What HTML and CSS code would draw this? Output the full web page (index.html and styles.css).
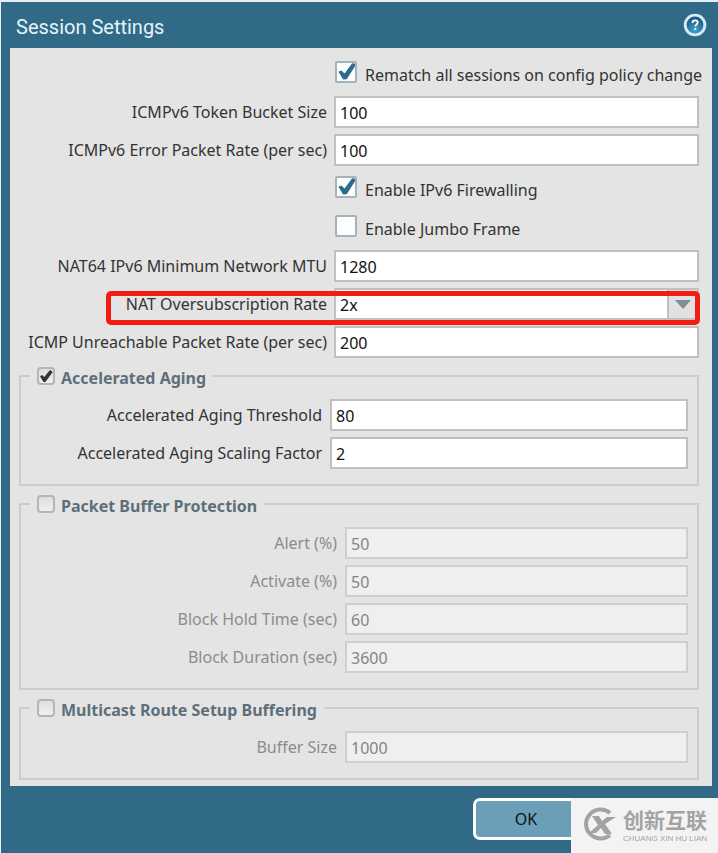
FILE: index.html
```html
<!DOCTYPE html>
<html lang="en">
<head>
  <meta charset="UTF-8" />
  <meta name="viewport" content="width=device-width, initial-scale=1.0" />
  <title>Session Settings</title>
  <link rel="stylesheet" href="styles.css">
</head>
<body>
  <form class="dialog">
    <!-- Title bar -->
    <header class="titlebar">
      <h1>Session Settings</h1>
      <button type="button" class="help" aria-label="Help">
        <svg width="24" height="24" viewBox="0 0 24 24">
          <defs>
            <radialGradient id="ball" cx="50%" cy="80%" r="75%">
              <stop offset="0" stop-color="#3fa3cf" />
              <stop offset="1" stop-color="#1d5480" />
            </radialGradient>
          </defs>
          <circle cx="12" cy="12" r="11.3" fill="#d5eaf8" />
          <circle cx="12" cy="12" r="8.4" fill="url(#ball)" />
          <path d="M9.4 9.8c.2-1.6 1.300-2.400 2.700-2.400 1.500 0 2.600.9 2.600 2.200 0 1.800-2.400 2-2.400 4" fill="none" stroke="#fff" stroke-width="1.8" />
          <circle cx="12.3" cy="16" r="1.1" fill="#fff" />
        </svg>
      </button>
    </header>

    <main class="panel">
      <div class="check-row">
        <input type="checkbox" class="check" id="rematch" checked />
        <label for="rematch">Rematch all sessions on config policy change</label>
      </div>
      <div class="row">
        <label for="bucket">ICMPv6 Token Bucket Size</label>
        <input type="text" class="field" id="bucket" value="100" />
      </div>
      <div class="row">
        <label for="error-rate">ICMPv6 Error Packet Rate (per sec)</label>
        <input type="text" class="field" id="error-rate" value="100" />
      </div>
      <div class="check-row">
        <input type="checkbox" class="check" id="ipv6" checked />
        <label for="ipv6">Enable IPv6 Firewalling</label>
      </div>
      <div class="check-row">
        <input type="checkbox" class="check" id="jumbo" />
        <label for="jumbo">Enable Jumbo Frame</label>
      </div>
      <div class="row">
        <label for="mtu">NAT64 IPv6 Minimum Network MTU</label>
        <input type="text" class="field" id="mtu" value="1280" />
      </div>
      <div class="row highlight">
        <label for="nat-rate">NAT Oversubscription Rate</label>
        <div class="combo">
          <select class="field" id="nat-rate">
            <option>1x</option>
            <option selected>2x</option>
            <option>4x</option>
            <option>8x</option>
          </select>
          <span class="trigger"></span>
        </div>
      </div>
      <div class="row">
        <label for="unreachable">ICMP Unreachable Packet Rate (per sec)</label>
        <input type="text" class="field" id="unreachable" value="200" />
      </div>

      <fieldset class="group aging">
        <legend>
          <input type="checkbox" class="toggle" id="aging" checked />
          <label for="aging">Accelerated Aging</label>
        </legend>
        <div class="row">
          <label for="threshold">Accelerated Aging Threshold</label>
          <input type="text" class="field" id="threshold" value="80" />
        </div>
        <div class="row">
          <label for="scaling">Accelerated Aging Scaling Factor</label>
          <input type="text" class="field" id="scaling" value="2" />
        </div>
      </fieldset>

      <fieldset class="group off">
        <legend>
          <input type="checkbox" class="toggle" id="protection" />
          <label for="protection">Packet Buffer Protection</label>
        </legend>
        <div class="row">
          <label for="alert">Alert (%)</label>
          <input type="text" class="field" id="alert" value="50" disabled />
        </div>
        <div class="row">
          <label for="activate">Activate (%)</label>
          <input type="text" class="field" id="activate" value="50" disabled />
        </div>
        <div class="row">
          <label for="hold">Block Hold Time (sec)</label>
          <input type="text" class="field" id="hold" value="60" disabled />
        </div>
        <div class="row">
          <label for="duration">Block Duration (sec)</label>
          <input type="text" class="field" id="duration" value="3600" disabled />
        </div>
      </fieldset>

      <fieldset class="group off">
        <legend>
          <input type="checkbox" class="toggle" id="multicast" />
          <label for="multicast">Multicast Route Setup Buffering</label>
        </legend>
        <div class="row">
          <label for="buffer">Buffer Size</label>
          <input type="text" class="field" id="buffer" value="1000" disabled />
        </div>
      </fieldset>
    </main>

    <footer class="actions">
      <button type="button" class="ok">OK</button>
    </footer>

    <!-- Site badge over the bottom right corner -->
    <div class="badge">
      <svg width="34" height="34" viewBox="0 0 34 34">
        <path d="M27 6A14.500 14.500 0 1 0 27 28" fill="none" stroke="#a3a3a3" stroke-width="4" />
        <path d="M9 9h7l3 5 5-4h9l-11 7 7 10h-7l-4-6-5 5H6l9-8z" fill="#a3a3a3" />
      </svg>
      <div class="badge-text">
        <span class="badge-name" lang="zh">创新互联</span>
        <span class="badge-sub">CHUANG XIN HU LIAN</span>
      </div>
    </div>
  </form>
</body>
</html>
```
FILE: styles.css
```css
* {
  box-sizing: border-box;
}
body {
  margin: 0;
  padding: 2px 0 0 1px;
  background-color: #e9eff5;
  font-family: "Noto Sans", "Open Sans", sans-serif;
  font-size: 16px;
  line-height: 24px;
  color: #333;
}
.dialog {
  position: relative;
  display: flex;
  flex-direction: column;
  min-height: calc(100vh - 2px);
  background-color: #306a87;
}

/* Title bar */
.titlebar {
  display: flex;
  align-items: center;
  justify-content: space-between;
  height: 46px;
  padding: 0 11px 0 15px;
}
.titlebar h1 {
  margin: 0;
  padding-top: 4px;
  font-family: Roboto, "Liberation Sans", sans-serif;
  font-size: 20px;
  font-weight: normal;
  color: #e3f4fb;
}
.help {
  display: flex;
  padding: 0;
  border: none;
  background: none;
  cursor: pointer;
}

/* Form rows */
.panel {
  display: flex;
  flex-direction: column;
  gap: 6px;
  margin: 0 6px 0 9px;
  padding: 9px 9px 6px;
  background-color: #e4e4e4;
}
.row {
  display: flex;
  align-items: center;
  gap: 7px;
  padding-right: 4px;
}
.row label {
  flex: none;
  width: 308px;
  text-align: right;
  white-space: nowrap;
}
.field {
  flex: 1;
  width: 100%;
  min-width: 0;
  height: 32px;
  margin: 0;
  padding: 2px 4px 0;
  border: 2px solid #c0c0c0;
  border-radius: 0;
  background-color: #fff;
  font: inherit;
  color: #111;
  outline: none;
}
.check-row {
  display: flex;
  align-items: flex-start;
  gap: 8px;
  height: 33px;
  padding: 4px 0 0 316px;
}
.check-row label {
  padding-top: 2px;
  white-space: nowrap;
}

/* Checkboxes */
.check,
.toggle {
  appearance: none;
  display: flex;
  align-items: center;
  justify-content: center;
  flex: none;
  margin: 0;
}
.check {
  width: 22px;
  height: 22px;
  border: 2px solid #a3b3bb;
  border-radius: 2px;
  background-color: #fdfdfd;
}
.check:checked::before {
  content: "";
  width: 18px;
  height: 18px;
  background-color: #2c6b8b;
  clip-path: polygon(8% 48%, 24% 42%, 42% 58%, 84% 2%, 100% 4%, 100% 18%, 54% 90%, 34% 92%);
}
.toggle {
  width: 18px;
  height: 18px;
  border: 2px solid #b5b5b5;
  border-radius: 4px;
  background-image: linear-gradient(#dedede, #f0f0f0);
}
.toggle:checked::before {
  content: "";
  width: 14px;
  height: 14px;
  background-color: #333;
  clip-path: polygon(7% 52%, 22% 42%, 38% 58%, 78% 8%, 98% 22%, 46% 92%, 32% 92%);
}

/* Drop-down */
.combo {
  position: relative;
  display: flex;
  flex: 1;
}
.combo select {
  appearance: none;
}
.trigger {
  position: absolute;
  top: 2px;
  right: 2px;
  bottom: 2px;
  display: flex;
  justify-content: center;
  width: 30px;
  padding-top: 10px;
  border-left: 2px solid #c0c0c0;
  background-color: #e1e1e1;
  pointer-events: none;
}
.trigger::before {
  content: "";
  width: 16px;
  height: 9px;
  background-color: #7d8f98;
  clip-path: polygon(0 0, 100% 0, 50% 100%);
}
.highlight {
  position: relative;
}
.highlight::after {
  content: "";
  position: absolute;
  top: 3px;
  right: 3px;
  bottom: -5px;
  left: 87px;
  border: 5px solid #f21d12;
  border-radius: 5px;
  pointer-events: none;
}

/* Groups */
.group {
  display: flex;
  flex-direction: column;
  gap: 6px;
  min-width: 0;
  margin: 0 4px 0 0;
  padding: 11px 9px 15px;
  border: 2px solid #ccc;
}
.group legend {
  display: flex;
  gap: 6px;
  height: 24px;
  padding: 0 7px;
}
.group legend label {
  padding-top: 2px;
  font-weight: bold;
  color: #5d6f79;
}
.group .toggle {
  margin-top: 3px;
}
.group .row {
  gap: 8px;
  padding: 0;
}
.aging .row label {
  width: 292px;
}
.off .row label {
  width: 307px;
  color: #8c8c8c;
}
.field:disabled {
  border-color: #cfcfcf;
  background-color: #efefef;
  color: #858585;
}

/* Footer */
.actions {
  display: flex;
  justify-content: flex-end;
  padding: 12px 139px 13px 9px;
}
.ok {
  width: 106px;
  height: 42px;
  border: 3px solid #fff;
  border-radius: 7px;
  background-color: #6a9fb7;
  font: inherit;
  color: #111;
  cursor: pointer;
}
.badge {
  position: absolute;
  right: 0;
  bottom: 0;
  display: flex;
  align-items: center;
  gap: 6px;
  width: 147px;
  height: 55px;
  padding: 0 0 4px 12px;
  background-color: #f3f3f3;
  color: #a3a3a3;
}
.badge-text {
  display: flex;
  flex-direction: column;
  white-space: nowrap;
}
.badge-name {
  font-family: "Noto Sans CJK SC", sans-serif;
  font-size: 21px;
  font-weight: bold;
  line-height: 30px;
}
.badge-sub {
  font-family: "Liberation Sans", sans-serif;
  font-size: 8px;
  line-height: 10px;
}
```
